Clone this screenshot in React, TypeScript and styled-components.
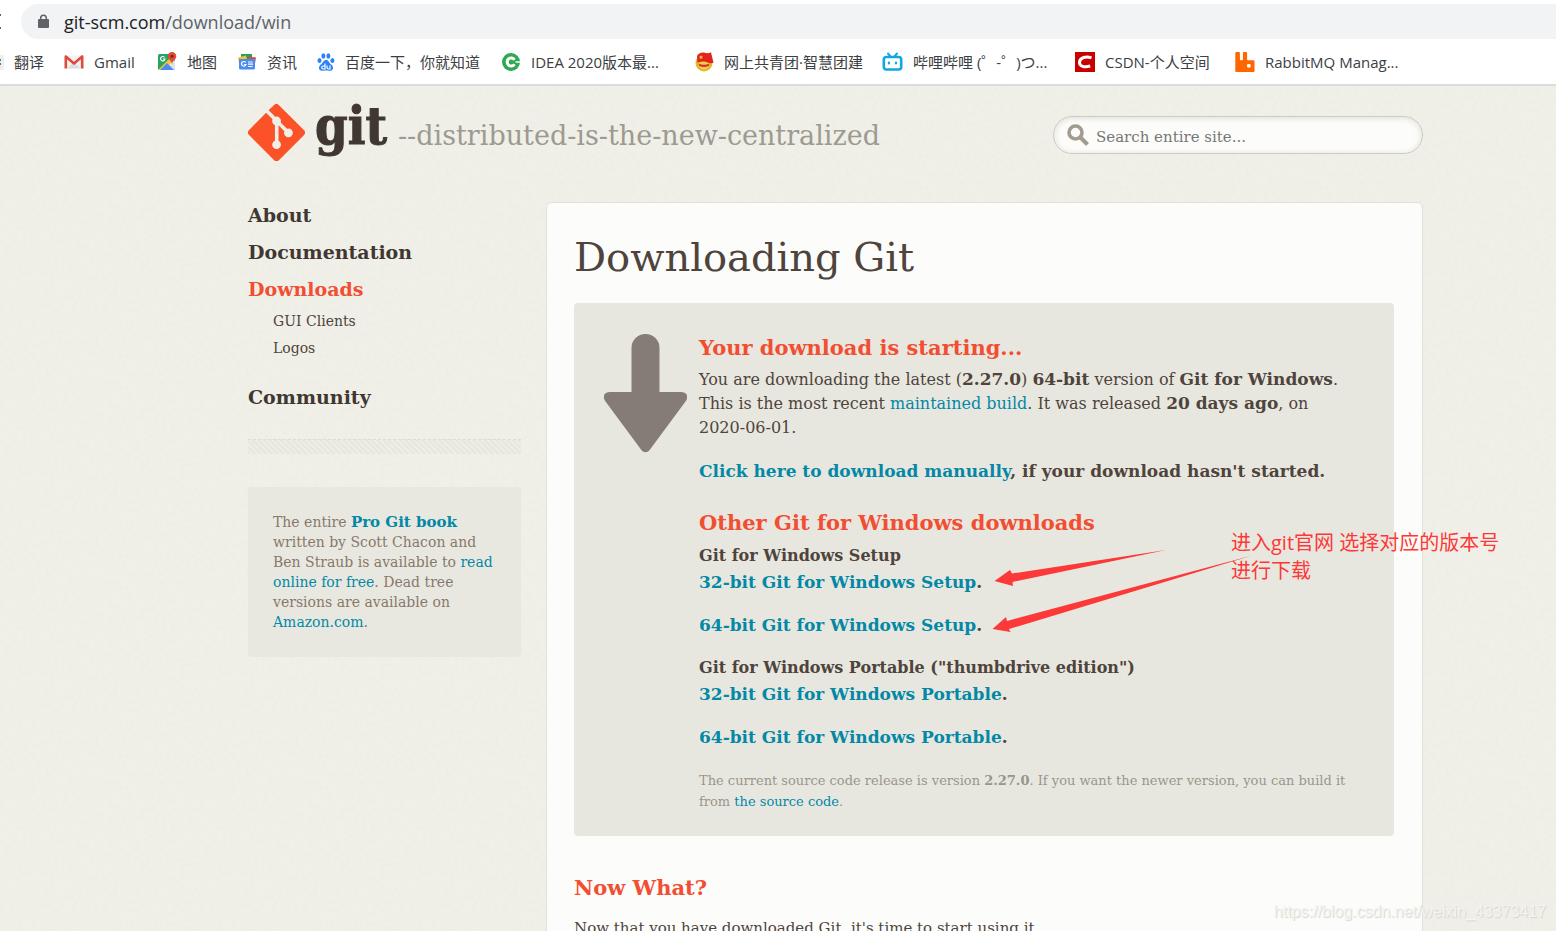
import React from 'react';
import styled, { createGlobalStyle } from 'styled-components';

const serif = 'Georgia, "DejaVu Serif", serif';
const ui = '"Segoe UI", "Open Sans", "Noto Sans CJK SC", sans-serif';

const color = {
  paper: '#f0f0e8',
  panel: '#fcfcfa',
  box: '#e8e7df',
  text: '#4e443c',
  muted: '#9a958c',
  orange: '#f14e32',
  link: '#0388a6',
  note: '#fd3838',
};

const GlobalStyle = createGlobalStyle`
  * { box-sizing: border-box; }
  body { margin: 0; background: ${color.paper}; color: ${color.text}; font-family: ${serif}; }
  a { color: ${color.link}; text-decoration: none; }
  h1, h2, h3, p, ul { margin: 0; padding: 0; }
  ul { list-style: none; }
`;

const Page = styled.div`
  position: relative;
  height: 100vh;
  overflow: hidden;
`;

const Chrome = styled.header`
  background: #fff;
  border-bottom: 2px solid #dadce0;
  font-family: ${ui};
`;

const AddressRow = styled.div`
  display: flex;
  align-items: center;
  gap: 19px;
  padding-top: 4px;
`;

const AddressPill = styled.div`
  flex: 1;
  display: flex;
  align-items: center;
  gap: 14px;
  height: 35px;
  padding-left: 16px;
  background: #f1f3f4;
  border-radius: 18px 0 0 18px;
  font-size: 18px;
  color: #5f6368;
`;

const Host = styled.span`
  color: #202124;
`;

const Bookmarks = styled.nav`
  display: flex;
  height: 45px;
  overflow: hidden;
`;

const Bookmark = styled.a<{ $width: number }>`
  flex: 0 0 ${(p) => p.$width}px;
  display: flex;
  align-items: center;
  gap: 10px;
  color: #3c4043;
  font-size: 15px;
  white-space: nowrap;
  svg { flex: none; }
`;

const Site = styled.div`
  padding: 0 133px 0 248px;
  height: 100%;
  background-color: ${color.paper};
  background-image: url("data:image/svg+xml,%3Csvg xmlns='http://www.w3.org/2000/svg' width='200' height='200'%3E%3Cfilter id='n'%3E%3CfeTurbulence type='fractalNoise' baseFrequency='.22' numOctaves='3' stitchTiles='stitch'/%3E%3CfeColorMatrix values='0 0 0 0 .5 0 0 0 0 .5 0 0 0 0 .42 .1 0 0 0 -.04'/%3E%3C/filter%3E%3Crect width='200' height='200' filter='url(%23n)'/%3E%3C/svg%3E");
`;

const Masthead = styled.div`
  display: flex;
  align-items: center;
  height: 111px;
  padding-bottom: 13px;
`;

const Logo = styled.a`
  display: flex;
  align-items: center;
  gap: 10px;
  width: 150px;
  padding-bottom: 6px;
`;

const Wordmark = styled.span`
  color: #413732;
  font: bold 52px/54px "DejaVu Serif Condensed", serif;
  padding-bottom: 12px;
  -webkit-text-stroke: 1px #413732;
`;

const Tagline = styled.span`
  flex: 1;
  font-size: 27px;
  color: #9c9a92;
  white-space: nowrap;
`;

const Search = styled.label`
  display: flex;
  align-items: center;
  gap: 6px;
  width: 370px;
  height: 38px;
  padding: 0 12px;
  border: 1px solid #cdccc4;
  border-radius: 19px;
  background: ${color.panel};
  box-shadow: inset 0 1px 6px #dddcd4;
`;

const SearchInput = styled.input`
  flex: 1;
  min-width: 0;
  padding: 3px 0 0;
  border: 0;
  outline: 0;
  background: none;
  font: 15px ${serif};
  &::placeholder { color: #777; opacity: 1; }
`;

const Columns = styled.div`
  display: grid;
  grid-template-columns: 273px minmax(0, 1fr);
  gap: 25px;
`;

const NavLink = styled.a<{ $active?: boolean }>`
  display: block;
  font: bold 19px/37px ${serif};
  color: ${(p) => (p.$active ? color.orange : '#413732')};
`;

const SubNav = styled.ul`
  padding: 0 0 17px 25px;
`;

const SubLink = styled.a`
  display: block;
  font-size: 14px;
  line-height: 27px;
  color: ${color.text};
`;

const Divider = styled.hr`
  height: 15px;
  margin: 23px 0 33px;
  border: 0;
  border-top: 1px dashed #deddd5;
  background: repeating-linear-gradient(45deg, #e8e7df 0 2px, transparent 3px 4px);
`;

const BookNote = styled.p`
  padding: 25px;
  border-radius: 3px;
  background: #e9e8e0;
  color: #87796a;
  font-size: 14px;
  line-height: 20px;
  white-space: nowrap;
`;

const Panel = styled.main`
  margin-top: 5px;
  padding: 24px 28px 60px 27px;
  border: 1px solid #e4e0d8;
  border-radius: 6px;
  background: ${color.panel};
`;

const Title = styled.h1`
  font-size: 40px;
  font-weight: normal;
  line-height: 60px;
`;

const DownloadBox = styled.section`
  display: grid;
  grid-template-columns: 83px minmax(0, 1fr);
  gap: 12px;
  margin: 16px 0 36px;
  padding: 29px 30px 24px;
  border-radius: 4px;
  background: ${color.box};
`;

const DownArrow = styled.svg`
  margin-top: 2px;
`;

const Heading = styled.h2`
  font: bold 21px/32px ${serif};
  color: ${color.orange};
`;

const Text = styled.p`
  margin-top: 4px;
  font-size: 16px;
  line-height: 24px;
  white-space: nowrap;
`;

const Manual = styled.p`
  margin: 18px 0 23px;
  font: bold 17px/26px ${serif};
`;

const Group = styled.div`
  margin-top: 4px;
  & + & { margin-top: 17px; }
`;

const GroupTitle = styled.h3`
  font: bold 16px/26px ${serif};
`;

const Package = styled.p`
  font: bold 17px/26px ${serif};
  & + & { margin-top: 17px; }
`;

const SourceNote = styled.p`
  margin-top: 20px;
  font-size: 13px;
  line-height: 21px;
  color: ${color.muted};
  white-space: nowrap;
`;

const NowText = styled(Text)`
  margin-top: 12px;
  font-size: 15px;
`;

const Arrows = styled.svg`
  position: absolute;
  left: 980px;
  top: 540px;
  pointer-events: none;
`;

const Annotation = styled.div`
  position: absolute;
  left: 1231px;
  top: 529px;
  color: ${color.note};
  font: 20px/28px "Open Sans", "Noto Sans CJK SC", sans-serif;
  white-space: nowrap;
`;

const Watermark = styled.div`
  position: absolute;
  right: 10px;
  bottom: 9px;
  color: #f4f4f0;
  font: 16px/20px "Liberation Sans", sans-serif;
  text-shadow: 1px 1px 1px #d4d4d0;
`;

const icons = {
  translate: (
    <svg width="4" height="20" viewBox="0 0 4 20"><path d="M0 3h2q2 0 2 2v11q0 2-2 2H0z" fill="#eceef0" /><path d="M0 8h1M0 12h1" stroke="#6b7075" strokeWidth="2" /></svg>
  ),
  gmail: (
    <svg width="20" height="20" viewBox="0 0 20 20"><path d="M1 3.500h18v13H1z" fill="#f1f1f1" /><path d="M3.500 16.500 9 11h2l5.500 5.500z" fill="#dedede" /><path d="M1.800 16.500V4.500L10 11.500l8.200-7v12" fill="none" stroke="#dd4b3e" strokeWidth="2.600" strokeLinejoin="round" /></svg>
  ),
  maps: (
    <svg width="20" height="20" viewBox="0 0 20 20"><rect x="1" y="2" width="17" height="16" rx="1.500" fill="#28a265" /><path d="M18 9v8q0 1-1 1h-3l-5-6 5-6z" fill="#dfe3e8" /><path d="M1 18 14 5l3 3L7 18z" fill="#fbc62f" /><path d="m3 18 7-7 7 7z" fill="#4c8bf5" /><path d="M7.500 5.300A2.200 2.200 0 1 0 8 7H6" fill="none" stroke="#fff" strokeWidth="1.200" /><path d="M15 0a4.300 4.300 0 0 0-4.300 4.300C10.700 7.500 14 8 15 12c1-4 4.300-4.500 4.300-7.700A4.300 4.300 0 0 0 15 0z" fill="#de4b3e" /><circle cx="15" cy="4.300" r="1.500" fill="#7d2319" /></svg>
  ),
  news: (
    <svg width="20" height="20" viewBox="0 0 20 20"><path d="M4 2h11v8H4z" fill="#2b9e5a" /><path d="m1 5.500 8-2 2 8H2z" fill="#f9c22e" /><path d="m19 5.500-7-1v7h6z" fill="#e1473b" /><path d="M2 7h16v9q0 1.500-1.500 1.500h-13Q2 17.500 2 16z" fill="#4b8bf4" /><path d="M8.700 10.500A2.300 2.300 0 1 0 9 12.500H7M11 10h4.500M11 12.200h5M11 14.500h4.500" fill="none" stroke="#fff" strokeWidth="1.200" /></svg>
  ),
  baidu: (
    <svg width="18" height="20" viewBox="0 0 18 20"><g fill="#2e82f7"><ellipse cx="2.500" cy="8.500" rx="2" ry="2.600" /><ellipse cx="6.400" cy="4" rx="2" ry="2.700" /><ellipse cx="11.400" cy="4" rx="2" ry="2.700" /><ellipse cx="15.400" cy="8.500" rx="2" ry="2.600" /><path d="M9 8c2.500 0 3 2.500 4.600 4s2.800 2.400 2.400 4.500-2.500 2.400-4 2.200-4-.2-6 0-3.700-.6-4-2.200.7-3 2.400-4.500S6.500 8 9 8z" /></g><path d="M8 11.500V17H6.200a1.500 1.500 0 0 1 0-3H8M10 13.500v2q0 1.500 1.500 1.500H13v-3.500" fill="none" stroke="#fff" strokeWidth="1.200" /></svg>
  ),
  idea: (
    <svg width="20" height="20" viewBox="0 0 20 20"><circle cx="10" cy="10" r="9" fill="#2fa84f" /><path d="M13.500 7.800A4 4 0 1 0 13.500 12.200" fill="none" stroke="#fff" strokeWidth="3" /><path d="M14.500 10h5.500" stroke="#fff" strokeWidth="1.500" /></svg>
  ),
  league: (
    <svg width="20" height="20" viewBox="0 0 20 20"><circle cx="10" cy="11" r="8.500" fill="#e3b62b" /><circle cx="10" cy="11.500" r="6" fill="#ecd04c" /><path d="M3 4q2-4 7-3.500 4 1.500 7-.2l2.500 10.500q-3.500 1-6.500-.5-3-2-9.500.5z" fill="#e1251b" /><path d="m7 3 .6 1.500 1.500.1-1.100 1 .3 1.500-1.300-.8-1.300.8.300-1.500-1.100-1 1.500-.1z" fill="#f8d64e" /><path d="M4.500 11.500q5.500 2.500 11 0l-.6 2.500q-4.900 2-9.800 0z" fill="#d9341f" /></svg>
  ),
  bilibili: (
    <svg width="21" height="20" viewBox="0 0 21 20"><path d="m6 1.500 2.500 3m6.500-3-2.500 3" stroke="#12a7e0" strokeWidth="2" strokeLinecap="round" /><rect x="1.800" y="5" width="17.400" height="12.500" rx="2.500" fill="#fff" stroke="#12a7e0" strokeWidth="2.600" /><path d="M7 10.500v1M14 10.500v1" stroke="#12a7e0" strokeWidth="2.200" strokeLinecap="round" /></svg>
  ),
  csdn: (
    <svg width="20" height="20" viewBox="0 0 20 20"><path d="M0 0h20v20H0z" fill="#c90000" /><path d="M16.500 5.800C11 3.800 5 5.500 4.500 10c-.4 4.500 5 5.700 10.700 4" fill="none" stroke="#fff" strokeWidth="3" /></svg>
  ),
  rabbit: (
    <svg width="20" height="20" viewBox="0 0 20 20"><path d="M1.300 0h2.600q1 0 1 1v6.500q0 .8.800.8h1.400q.8 0 .8-.8V1q0-1 1-1h2.200q1 0 1 1v6.500q0 .8.800.8h5.600q1 0 1 1V19q0 1-1 1H1.300q-1 0-1-1V1q0-1 1-1z" fill="#f60" /><rect x="12" y="12" width="3.600" height="3.600" rx="1" fill="#fff" /></svg>
  ),
};

const bookmarks: { icon: keyof typeof icons; label: string; width: number }[] = [
  { icon: 'translate', label: '翻译', width: 64 },
  { icon: 'gmail', label: 'Gmail', width: 93 },
  { icon: 'maps', label: '地图', width: 80 },
  { icon: 'news', label: '资讯', width: 80 },
  { icon: 'baidu', label: '百度一下，你就知道', width: 184 },
  { icon: 'idea', label: 'IDEA 2020版本最...', width: 193 },
  { icon: 'league', label: '网上共青团·智慧团建', width: 188 },
  { icon: 'bilibili', label: '哔哩哔哩 (゜-゜)つ...', width: 193 },
  { icon: 'csdn', label: 'CSDN-个人空间', width: 160 },
  { icon: 'rabbit', label: 'RabbitMQ Manag...', width: 180 },
];

function GitMark() {
  return (
    <svg width="57" height="57" viewBox="0 0 92 92" aria-hidden="true">
      <path
        fill="#fc5228"
        d="M90.155 41.965L50.036 1.847a5.918 5.918 0 0 0-8.372 0l-8.328 8.332 10.566 10.566a7.03 7.03 0 0 1 7.230 1.684 7.034 7.034 0 0 1 1.669 7.277l10.187 10.184a7.028 7.028 0 0 1 7.278 1.672 7.040 7.040 0 0 1 0 9.957 7.050 7.050 0 0 1-9.965 0 7.044 7.044 0 0 1-1.528-7.660l-9.500-9.497V59.360a7.040 7.040 0 0 1 1.860 11.290 7.040 7.040 0 0 1-9.957 0 7.040 7.040 0 0 1 0-9.958 7.060 7.060 0 0 1 2.304-1.539V33.926a7.049 7.049 0 0 1-3.820-9.234L29.242 14.272 1.730 41.777a5.918 5.918 0 0 0 0 8.371L41.852 90.270a5.925 5.925 0 0 0 8.370 0l39.933-39.934a5.925 5.925 0 0 0 0-8.371"
      />
    </svg>
  );
}

const Strong = styled.strong`
  font-size: 17px;
  line-height: 1;
`;

const BookTitle = styled(Strong)`
  font-size: 15px;
`;

export default function App() {
  return (
    <Page>
      <GlobalStyle />
      <Chrome>
        <AddressRow>
          <svg width="2" height="20" viewBox="0 0 2 20"><path d="M0 3h1M0 16h1" stroke="#5f6368" strokeWidth="2" /></svg>
          <AddressPill>
            <svg width="13" height="15" viewBox="0 0 13 15">
              <rect x="1" y="5" width="11" height="9" rx="1" fill="#5f6368" />
              <path d="M3.700 6V4a2.800 2.800 0 0 1 5.600 0v2" fill="none" stroke="#5f6368" strokeWidth="1.500" />
            </svg>
            <span><Host>git-scm.com</Host>/download/win</span>
          </AddressPill>
        </AddressRow>
        <Bookmarks aria-label="Bookmarks">
          {bookmarks.map((b) => (
            <Bookmark key={b.label} href="#" $width={b.width}>
              {icons[b.icon]}
              {b.label}
            </Bookmark>
          ))}
        </Bookmarks>
      </Chrome>

      <Site>
        <Masthead>
          <Logo href="#">
            <GitMark />
            <Wordmark>git</Wordmark>
          </Logo>
          <Tagline>--distributed-is-the-new-centralized</Tagline>
          <Search>
            <svg width="24" height="24" viewBox="0 0 24 24" aria-hidden="true">
              <circle cx="9.500" cy="9.500" r="6.500" fill="none" stroke="#a39a90" strokeWidth="3.600" />
              <path d="m14.500 14.500 7 7" stroke="#a39a90" strokeWidth="4" />
            </svg>
            <SearchInput type="text" aria-label="Search entire site" placeholder="Search entire site..." />
          </Search>
        </Masthead>

        <Columns>
          <aside>
            <nav aria-label="Site">
              <NavLink href="#">About</NavLink>
              <NavLink href="#">Documentation</NavLink>
              <NavLink href="#" $active>Downloads</NavLink>
              <SubNav>
                <li><SubLink href="#">GUI Clients</SubLink></li>
                <li><SubLink href="#">Logos</SubLink></li>
              </SubNav>
              <NavLink href="#">Community</NavLink>
            </nav>
            <Divider />
            <BookNote>
              The entire <a href="#"><BookTitle>Pro Git book</BookTitle></a><br />
              written by Scott Chacon and<br />
              Ben Straub is available to <a href="#">read<br />
              online for free</a>. Dead tree<br />
              versions are available on<br />
              <a href="#">Amazon.com</a>.
            </BookNote>
          </aside>

          <Panel>
            <Title>Downloading Git</Title>
            <DownloadBox>
              <DownArrow width="83" height="119" viewBox="0 0 83 119" aria-hidden="true">
                <path
                  fill="#857c76"
                  d="M27.500 58V14a14 14 0 0 1 28 0v44H77c6 0 8 5 4.500 9.500L46 115.500c-2.500 3.500-6.500 3.500-9 0L1.500 67.500C-2 63 0 58 6 58z"
                />
              </DownArrow>
              <div>
                <Heading>Your download is starting...</Heading>
                <Text>
                  You are downloading the latest (<Strong>2.27.0</Strong>) <Strong>64-bit</Strong> version of <Strong>Git for Windows</Strong>.<br />
                  This is the most recent <a href="#">maintained build</a>. It was released <Strong>20 days ago</Strong>, on<br />
                  2020-06-01.
                </Text>
                <Manual><a href="#">Click here to download manually</a>, if your download hasn't started.</Manual>
                <Heading>Other Git for Windows downloads</Heading>
                <Group>
                  <GroupTitle>Git for Windows Setup</GroupTitle>
                  <Package><a href="#">32-bit Git for Windows Setup</a>.</Package>
                  <Package><a href="#">64-bit Git for Windows Setup</a>.</Package>
                </Group>
                <Group>
                  <GroupTitle>Git for Windows Portable ("thumbdrive edition")</GroupTitle>
                  <Package><a href="#">32-bit Git for Windows Portable</a>.</Package>
                  <Package><a href="#">64-bit Git for Windows Portable</a>.</Package>
                </Group>
                <SourceNote>
                  The current source code release is version <b>2.27.0</b>. If you want the newer version, you can build it<br />
                  from <a href="#">the source code</a>.
                </SourceNote>
              </div>
            </DownloadBox>
            <Heading>Now What?</Heading>
            <NowText>Now that you have downloaded Git, it's time to start using it.</NowText>
          </Panel>
        </Columns>
      </Site>

      <Arrows width="280" height="100" viewBox="980 540 280 100" aria-hidden="true">
        <path fill={color.note} d="M1166 550 1012 573.500 1010 570 994.500 581 1013 586 1012.500 582z" />
        <path fill={color.note} d="M1252 555.500 1007 621 1006 617 992.500 629 1010.500 632 1009 629z" />
      </Arrows>
      <Annotation>进入git官网 选择对应的版本号<br />进行下载</Annotation>
      <Watermark>https://blog.csdn.net/weixin_43373417</Watermark>
    </Page>
  );
}
